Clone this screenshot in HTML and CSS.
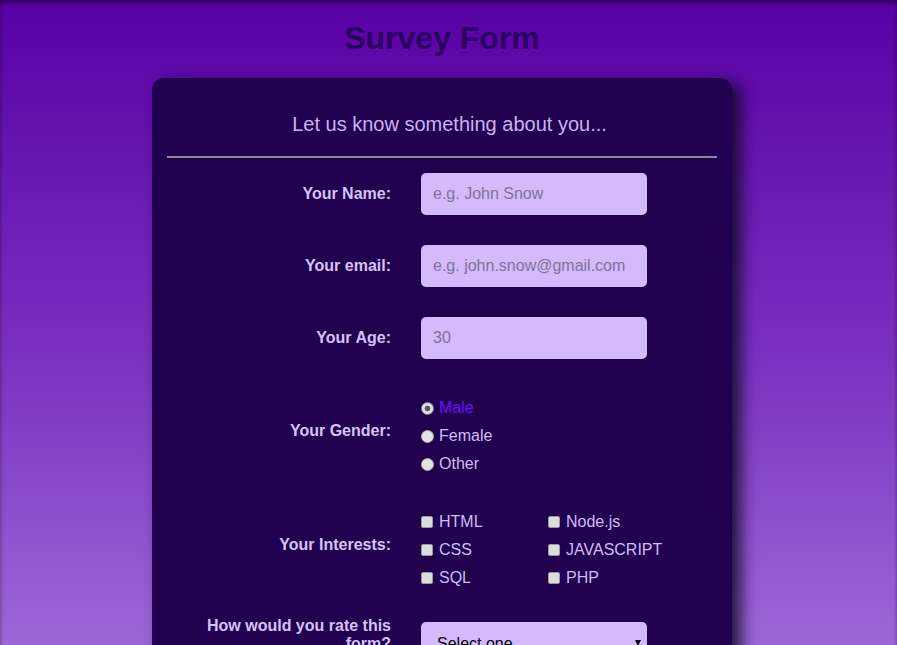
FILE: index.html
```html
<!DOCTYPE html>
<html lang="en">
<head>
<meta charset="utf-8">
<title>Survey Form</title>
<link rel="stylesheet" href="styles.css">
</head>
<body>
<h1 class="title">Survey Form</h1>
<form class="card">
  <p class="intro">Let us know something about you...</p>
  <hr class="divider">
  <div class="row">
    <label class="label" for="name">Your Name:</label>
    <input class="field" id="name" type="text" placeholder="e.g. John Snow">
  </div>
  <div class="row">
    <label class="label" for="email">Your email:</label>
    <input class="field" id="email" type="email" placeholder="e.g. john.snow@gmail.com">
  </div>
  <div class="row">
    <label class="label" for="age">Your Age:</label>
    <input class="field" id="age" type="number" placeholder="30">
  </div>
  <div class="row row-gender">
    <span class="label label-shift">Your Gender:</span>
    <div class="choices">
      <label class="choice checked"><input type="radio" name="g" checked>Male</label>
      <label class="choice"><input type="radio" name="g">Female</label>
      <label class="choice"><input type="radio" name="g">Other</label>
    </div>
  </div>
  <div class="row row-interests">
    <span class="label label-shift">Your Interests:</span>
    <div class="checks">
      <label class="choice"><input type="checkbox">HTML</label>
      <label class="choice"><input type="checkbox">Node.js</label>
      <label class="choice"><input type="checkbox">CSS</label>
      <label class="choice"><input type="checkbox">JAVASCRIPT</label>
      <label class="choice"><input type="checkbox">SQL</label>
      <label class="choice"><input type="checkbox">PHP</label>
    </div>
  </div>
  <div class="row row-rate">
    <label class="label label-top" for="rate">How would you rate this form?</label>
    <div class="select-wrap">
      <select class="field select" id="rate">
        <option>Select one</option>
        <option>Good</option>
        <option>Bad</option>
      </select>
    </div>
  </div>
</form>
</body>
</html>
```

FILE: styles.css
```css
html, body {
  margin: 0;
  padding: 0;
}
body {
  min-height: 100vh;
  font-family: "Liberation Sans", Arial, sans-serif;
  background: linear-gradient(to bottom, #5800a4 0%, #7a30c0 50%, #a472dc 100%);
  box-shadow: inset 0 3px 4px rgba(0, 0, 0, 0.45);
  overflow: hidden;
}
.title {
  margin: 0;
  padding: 20px 13px 0 0;
  height: 78px;
  box-sizing: border-box;
  text-align: center;
  font-size: 32px;
  line-height: 37px;
  font-weight: bold;
  color: #2a0060;
}
.card {
  width: 580px;
  margin-left: 152px;
  box-sizing: border-box;
  padding: 34px 15px 40px;
  background: #21004f;
  border-radius: 12px;
  box-shadow: 9px 5px 16px rgba(10, 10, 30, 0.85);
}
.intro {
  margin: 0;
  padding-left: 15px;
  text-align: center;
  font-size: 20px;
  line-height: 24px;
  color: #c9b3f2;
}
.divider {
  margin: 20px 0 15px;
  border: none;
  height: 2px;
  background: #8c8c8c;
}
.row {
  display: grid;
  grid-template-columns: 224px 226px;
  column-gap: 30px;
  align-items: center;
  margin-bottom: 30px;
}
.label {
  text-align: right;
  font-size: 16px;
  font-weight: bold;
  line-height: 18px;
  color: #d6c2f8;
}
.label-shift {
  margin-bottom: 10px;
}
.label-top {
  align-self: start;
  margin-top: -5px;
}
.field {
  box-sizing: border-box;
  width: 226px;
  height: 42px;
  border: none;
  border-radius: 5px;
  background: #d4b9fc;
  padding: 0 12px;
  font-family: "Liberation Sans", Arial, sans-serif;
  font-size: 16px;
  color: #222;
  outline: none;
}
.field::placeholder {
  color: #7d7497;
}
.row-gender {
  margin-top: 35px;
}
.choices {
  display: flex;
  flex-direction: column;
}
.choice {
  display: flex;
  align-items: center;
  height: 28px;
  font-size: 16px;
  color: #d0bcf6;
}
.choice.checked {
  color: #6a10ff;
}
.choice input {
  appearance: none;
  -webkit-appearance: none;
  box-sizing: border-box;
  margin: 0 5px 0 0;
  width: 13px;
  height: 13px;
  background: #e2e2e2;
  border: 1px solid #a8a8a8;
  border-radius: 50%;
}
.choice input[type="radio"]:checked {
  background: radial-gradient(circle, #5a5a5a 0, #5a5a5a 2.6px, #e2e2e2 3.2px);
  border-color: #8a8a8a;
}
.checks {
  display: grid;
  grid-template-columns: 127px 120px;
}
.choice input[type="checkbox"] {
  width: 12px;
  height: 12px;
  margin-right: 6px;
  border-radius: 2px;
  background: #dcdcdc;
  border-color: #9a9a9a;
}
.row-rate {
  margin-bottom: 0;
  margin-top: 30px;
}
.select-wrap {
  position: relative;
  width: 226px;
}
.select {
  appearance: none;
  -webkit-appearance: none;
  padding: 0 16px;
  color: #000;
}
.select-wrap::after {
  content: "";
  position: absolute;
  right: 6px;
  top: 18px;
  border-left: 3px solid transparent;
  border-right: 3px solid transparent;
  border-top: 6px solid #000;
}
```
